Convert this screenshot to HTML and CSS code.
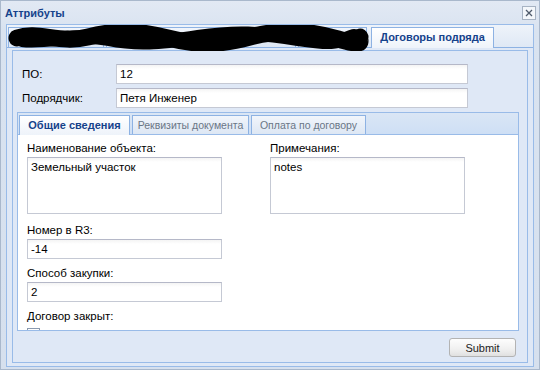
FILE: index.html
```html
<!DOCTYPE html>
<html lang="ru">
<head>
    <meta charset="UTF-8">
    <title>Аттрибуты</title>
    <link rel="stylesheet" href="styles.css">
</head>
<body>
    <div class="window">
        <div class="win-header">
            <span class="win-title">Аттрибуты</span>
            <span class="win-close">
                <svg width="8" height="8" viewBox="0 0 8 8"><path d="M1 1L7 7M7 1L1 7" stroke="#4f5b6b" stroke-width="1.3"/></svg>
            </span>
        </div>
        <div class="win-body">
            <div class="tabstrip outer">
                <div class="hidden-tabs">
                    <div class="tab blank w1"></div>
                    <div class="tab blank w2"></div>
                    <div class="tab blank w3"></div>
                    <svg class="scribble" width="362" height="26" viewBox="0 0 362 26">
                        <path d="M9 13 C 30 6, 52 19, 80 12 S 128 5, 160 13 S 212 20, 242 12 S 300 5, 330 14 S 350 15, 352 12" fill="none" stroke="#000" stroke-width="17" stroke-linecap="round" stroke-linejoin="round"/>
                        <path d="M14 15 C 40 18, 70 8, 100 14 S 150 18, 190 12 S 250 8, 290 14 S 330 16, 346 11" fill="none" stroke="#000" stroke-width="14" stroke-linecap="round"/>
                        <circle cx="120" cy="9" r="7" fill="#000"/>
                        <circle cx="205" cy="17" r="7" fill="#000"/>
                        <circle cx="300" cy="10" r="7" fill="#000"/>
                    </svg>
                </div>
                <div class="tab active">Договоры подряда</div>
            </div>
            <div class="outer-panel">
                <div class="form-panel">
                    <div class="row">
                        <label>ПО:</label>
                        <div class="input wide">12</div>
                    </div>
                    <div class="row">
                        <label>Подрядчик:</label>
                        <div class="input wide">Петя Инженер</div>
                    </div>

                    <div class="inner-tabs">
                        <div class="tabstrip inner">
                            <div class="tab active">Общие сведения</div>
                            <div class="tab">Реквизиты документа</div>
                            <div class="tab">Оплата по договору</div>
                        </div>
                        <div class="tab-body">
                            <div class="col">
                                <div class="field first">
                                    <div class="label">Наименование объекта:</div>
                                    <div class="textarea">Земельный участок</div>
                                </div>
                                <div class="field">
                                    <div class="label">Номер в R3:</div>
                                    <div class="input">-14</div>
                                </div>
                                <div class="field">
                                    <div class="label">Способ закупки:</div>
                                    <div class="input">2</div>
                                </div>
                                <div class="field">
                                    <div class="label">Договор закрыт:</div>
                                    <div class="checkbox"></div>
                                </div>
                            </div>
                            <div class="col">
                                <div class="field">
                                    <div class="label">Примечания:</div>
                                    <div class="textarea">notes</div>
                                </div>
                            </div>
                        </div>
                    </div>

                    <div class="buttons">
                        <button>Submit</button>
                    </div>
                </div>
            </div>
        </div>
    </div>
</body>
</html>
```

FILE: styles.css
```css
body {
    margin: 0;
    background: #fff;
    font-family: "Liberation Sans", Arial, sans-serif;
    font-size: 11px;
    color: #000;
}
.window {
    width: 540px;
    height: 370px;
    box-sizing: border-box;
    border: 1px solid #a9b8cc;
    background: linear-gradient(#e2e9f4, #d9e3f0 30px, #d6e0ee);
}
.win-header {
    height: 23px;
    display: flex;
    align-items: center;
    justify-content: space-between;
    padding: 0 3px 0 4px;
}
.win-title {
    font-weight: bold;
    color: #15428b;
    font-size: 11px;
}
.win-close {
    width: 12px;
    height: 12px;
    border: 1px solid #a7b3c3;
    background: #f4f7fb;
    display: flex;
    align-items: center;
    justify-content: center;
}
.win-body {
    margin: 0 5px;
    border: 1px solid #99bbe8;
    background: #dfe8f6;
}

/* tab strips */
.tabstrip {
    display: flex;
    align-items: flex-end;
    gap: 2px;
    border-bottom: 1px solid #8db2e3;
}
.tab {
    height: 19px;
    box-sizing: border-box;
    line-height: 18px;
    padding: 0 10px;
    border: 1px solid #8db2e3;
    border-bottom: none;
    background: linear-gradient(#f1f5fb, #dde7f4);
    color: #6a7686;
    white-space: nowrap;
    text-align: center;
}
.tab.active {
    font-weight: bold;
    color: #15428b;
    background: linear-gradient(#fff, #eef3fa);
    height: 20px;
    margin-bottom: -1px;
    line-height: 19px;
}
.outer {
    height: 22px;
    padding-left: 1px;
    background: linear-gradient(#eef3fa, #dfe8f5);
}
.outer .tab {
    height: 20px;
}
.outer .tab.active {
    height: 21px;
    width: 123px;
    padding: 0;
    font-size: 11px;
}
.hidden-tabs {
    position: relative;
    display: flex;
    gap: 2px;
    width: 361px;
}
.tab.blank { padding: 0; }
.w1 { width: 96px; }
.w2 { width: 190px; }
.w3 { width: 69px; }
.scribble {
    position: absolute;
    left: 0;
    top: -2px;
}

.outer-panel {
    padding: 2px 5px 3px 5px;
}
.form-panel {
    border: 1px solid #99bbe8;
    background: #dfe8f6;
    padding: 13px 8px 0 4px;
}
.row {
    display: flex;
    align-items: center;
    padding-left: 5px;
    margin-bottom: 4px;
}
.row label {
    width: 94px;
    font-size: 11.5px;
}
.input, .textarea {
    box-sizing: border-box;
    height: 20px;
    border: 1px solid #c5c9d4;
    border-top-color: #b5b8c8;
    background: linear-gradient(#f4f4f4, #fff 4px);
    padding: 2px 3px;
    font-size: 11.5px;
    line-height: 15px;
}
.input.wide { width: 352px; }

.inner-tabs {
    margin-top: 4px;
    width: 502px;
}
.inner {
    height: 21px;
    padding-left: 1px;
    background: linear-gradient(#dae6f5, #cedff5);
    border: 1px solid #99bbe8;
}
.inner .tab {
    padding: 0;
    font-size: 10.5px;
}
.inner .tab.active { font-size: 11px; }
.inner .tab:nth-child(1) { width: 111px; }
.inner .tab:nth-child(2) { width: 117px; }
.inner .tab:nth-child(3) { width: 115px; }

.tab-body {
    height: 196px;
    overflow: hidden;
    background: #fff;
    border: 1px solid #99bbe8;
    border-top: none;
    box-sizing: border-box;
    display: flex;
    gap: 48px;
    padding: 5px 0 0 9px;
}
.col {
    width: 195px;
}
.field {
    margin-bottom: 6px;
}
.field.first {
    margin-bottom: 8px;
}
.label {
    font-size: 11.5px;
    line-height: 16px;
    margin-bottom: 1px;
}
.textarea {
    height: 57px;
}
.checkbox {
    width: 11px;
    height: 11px;
    border: 1px solid #8a9ab0;
    margin-top: 4px;
    background: #fff;
}

.buttons {
    height: 31px;
    display: flex;
    justify-content: flex-end;
    align-items: flex-start;
    padding: 7px 3px 0 0;
    box-sizing: border-box;
}
button {
    width: 67px;
    height: 19px;
    border: 1px solid #b3b3b3;
    border-radius: 3px;
    background: linear-gradient(#fdfdfd, #f0f0f0 60%, #e0e0e0);
    font-family: "Liberation Sans", Arial, sans-serif;
    font-size: 11px;
    color: #222;
    padding: 0;
}
```
